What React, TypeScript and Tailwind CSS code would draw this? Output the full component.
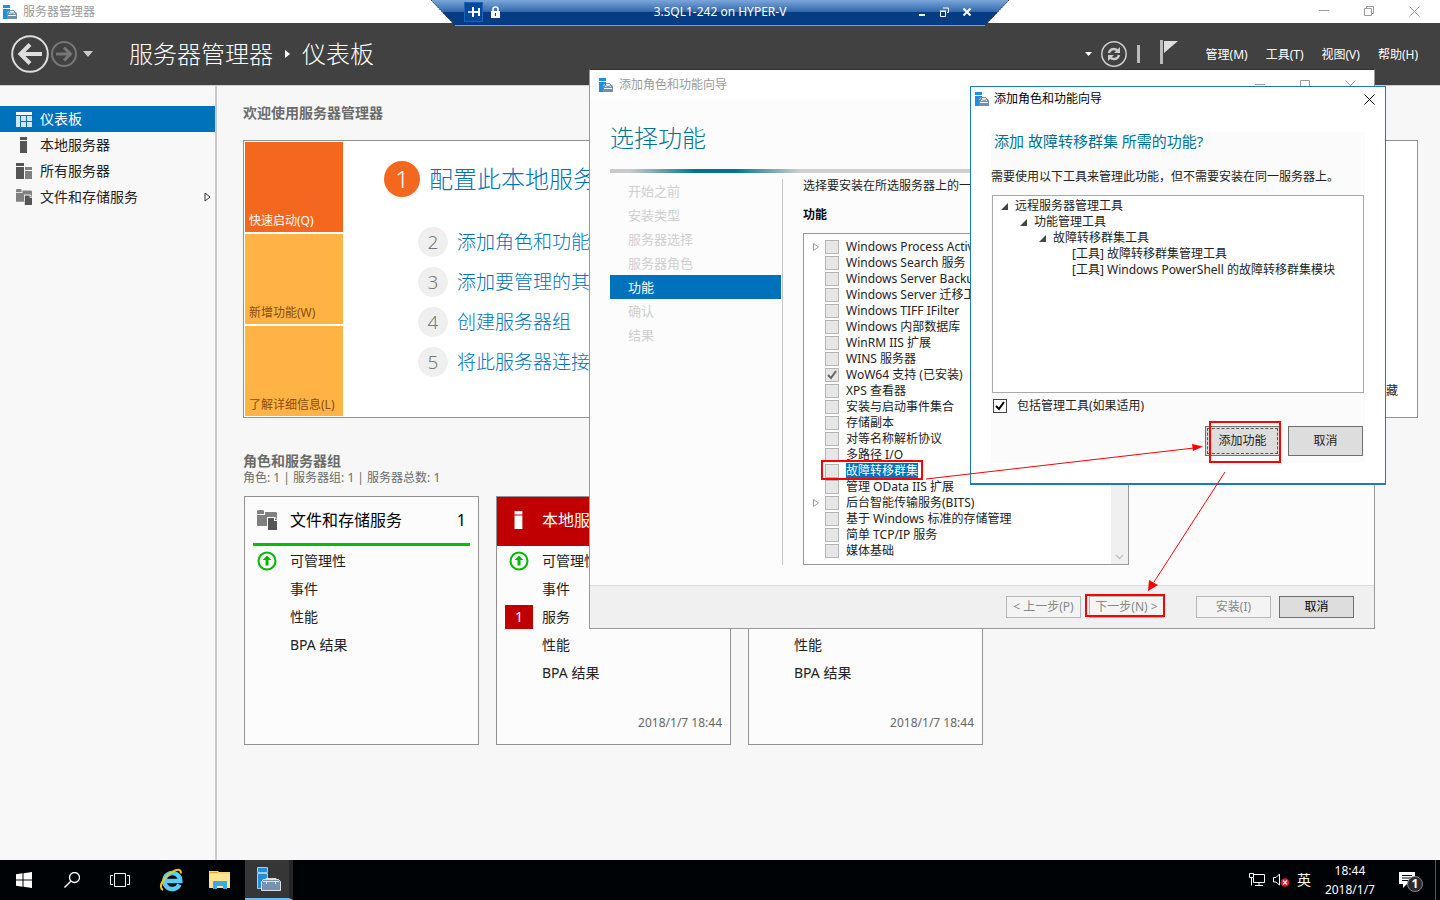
import type { ReactNode } from 'react'

interface Feature {
  name: string
  expandable?: boolean
  checked?: boolean
  selected?: boolean
}

interface TileRow {
  label: string
  ok?: boolean
  alert?: number
}

interface Tile {
  title: string
  icon: ReactNode
  alert: boolean
  rows: TileRow[]
  timestamp?: string
}

const FEATURES: Feature[] = [
  { name: 'Windows Process Activation Service', expandable: true },
  { name: 'Windows Search 服务' },
  { name: 'Windows Server Backup' },
  { name: 'Windows Server 迁移工具' },
  { name: 'Windows TIFF IFilter' },
  { name: 'Windows 内部数据库' },
  { name: 'WinRM IIS 扩展' },
  { name: 'WINS 服务器' },
  { name: 'WoW64 支持 (已安装)', checked: true },
  { name: 'XPS 查看器' },
  { name: '安装与启动事件集合' },
  { name: '存储副本' },
  { name: '对等名称解析协议' },
  { name: '多路径 I/O' },
  { name: '故障转移群集', selected: true },
  { name: '管理 OData IIS 扩展' },
  { name: '后台智能传输服务(BITS)', expandable: true },
  { name: '基于 Windows 标准的存储管理' },
  { name: '简单 TCP/IP 服务' },
  { name: '媒体基础' },
]

const WIZARD_STEPS = ['开始之前', '安装类型', '服务器选择', '服务器角色', '功能', '确认', '结果']

const QUICK_STEPS = ['添加角色和功能', '添加要管理的其他服务器', '创建服务器组', '将此服务器连接到云服务']

function ServerManagerIcon({ className }: { className: string }) {
  return (
    <svg viewBox="0 0 14 14" className={className} aria-hidden="true">
      <path d="M0 0h7v3H0zM0 4h7v2L4 7v7H0z" fill="#1f8fe0" />
      <path d="M3 8.500L5 7h8l1 1.500V14H4V9z" fill="#6f8fab" />
      <path d="M6 7.500L7 5.500h4l1 2" fill="none" stroke="#6f8fab" />
      <path d="M6 8.500q3.500-2 6 0M5 10.500h8" stroke="#fff" strokeWidth=".9" fill="none" />
    </svg>
  )
}

function DashboardIcon() {
  return (
    <svg viewBox="0 0 16 15" className="h-[15px] w-4">
      <path d="M0 0h16v3H0z" fill="#fff" />
      <path d="M0 4h4v11H0zM5 4h5v5H5zM11 4h5v5h-5zM5 10h5v5H5zM11 10h5v5h-5z" fill="#cfe6f7" />
    </svg>
  )
}

function LocalServerIcon({ className, fill = '#555' }: { className: string; fill?: string }) {
  return (
    <svg viewBox="0 0 16 16" className={className}>
      <path d="M4 0h7v3H4zM4 4h7v12H4z" fill={fill} />
    </svg>
  )
}

function AllServersIcon({ className, back = '#808080', front = '#555' }: { className: string; back?: string; front?: string }) {
  return (
    <svg viewBox="0 0 16 16" className={className}>
      <path d="M0 0h8v3H0zM0 4h8v12H0z" fill={front} />
      <path d="M9 4h7v3H9zM9 8h7v8H9z" fill={back} />
    </svg>
  )
}

function StorageIcon({ className, paper }: { className: string; paper: string }) {
  return (
    <svg viewBox="0 0 20 20" className={className}>
      <path d="M1 0h5l1 1v3H0V1zM0 5h8V2h11l1 1v13H0z" fill="#808080" />
      <path d="M10 7h8l2 2v11h-9v-4h-1z" fill={paper} />
      <path d="M11 8h6v3h3v9h-9z" fill="#555" />
      <path d="M18 8l2 2h-2z" fill="#555" />
    </svg>
  )
}

function CloseGlyph({ className }: { className: string }) {
  return (
    <svg viewBox="0 0 11 11" className={className}>
      <path d="M.5.5l10 10M10.500.5l-10 10" stroke="currentColor" fill="none" />
    </svg>
  )
}

function CheckGlyph({ className }: { className: string }) {
  return (
    <svg viewBox="0 0 14 14" className={className}>
      <path d="M3 7l3 3 5-7" fill="none" stroke="currentColor" strokeWidth="2" />
    </svg>
  )
}

function OkIcon() {
  return (
    <svg viewBox="0 0 20 20" className="size-5">
      <circle cx="10" cy="10" r="8.500" fill="none" stroke="#00b800" strokeWidth="2" />
      <path d="M10 4.500l4.500 4.500h-3v5.500h-3V9h-3z" fill="#00b800" />
    </svg>
  )
}

const TILES: Tile[] = [
  {
    title: '文件和存储服务',
    icon: <StorageIcon className="size-5" paper="#fcfcfc" />,
    alert: false,
    rows: [{ label: '可管理性', ok: true }, { label: '事件' }, { label: '性能' }, { label: 'BPA 结果' }],
  },
  {
    title: '本地服务器',
    icon: <LocalServerIcon className="size-[18px]" fill="#fff" />,
    alert: true,
    rows: [
      { label: '可管理性', ok: true },
      { label: '事件' },
      { label: '服务', alert: 1 },
      { label: '性能' },
      { label: 'BPA 结果' },
    ],
    timestamp: '2018/1/7 18:44',
  },
  {
    title: '所有服务器',
    icon: <AllServersIcon className="size-[18px]" front="#fff" back="#fff" />,
    alert: true,
    rows: [
      { label: '可管理性', ok: true },
      { label: '事件' },
      { label: '服务', alert: 1 },
      { label: '性能' },
      { label: 'BPA 结果' },
    ],
    timestamp: '2018/1/7 18:44',
  },
]

function TitleBar() {
  return (
    <div className="flex h-[23px] items-center bg-white pl-[3px] text-[#999]">
      <ServerManagerIcon className="size-[14px]" />
      <span className="ml-[6px] flex-1">服务器管理器</span>
      <button aria-label="最小化" className="flex w-[45px] justify-center">
        <svg viewBox="0 0 11 11" className="size-[11px]"><path d="M0 4.500h10" stroke="currentColor" /></svg>
      </button>
      <button aria-label="还原" className="flex w-[45px] justify-center">
        <svg viewBox="0 0 11 11" className="size-[11px]">
          <path d="M.5 2.500h7v7h-7zM2.500 2.500v-2h7v7h-2" fill="none" stroke="currentColor" />
        </svg>
      </button>
      <button aria-label="关闭" className="mr-[3px] flex w-[45px] justify-center">
        <CloseGlyph className="size-[11px]" />
      </button>
    </div>
  )
}

function ConnectionBar() {
  return (
    <div className="absolute top-0 left-1/2 h-[26px] w-[578px] -translate-x-1/2">
      <svg viewBox="0 0 578 26" className="absolute inset-0 h-[26px] w-[578px]">
        <defs>
          <linearGradient id="bar" x1="0" y1="0" x2="0" y2="1">
            <stop offset="0" stopColor="#7ba6da" />
            <stop offset=".46" stopColor="#3269ac" />
            <stop offset=".47" stopColor="#053b82" />
            <stop offset="1" stopColor="#053c85" />
          </linearGradient>
        </defs>
        <path d="M0 0h578l-24 25.500H24z" fill="url(#bar)" />
        <path d="M0 0l24 25.500M578 0l-24 25.500" stroke="#333" strokeDasharray="2 1" />
        <path d="M24 25.500h530" stroke="#7d9cca" />
      </svg>
      <div className="relative flex h-6 items-center pr-[38px] pl-[33px] text-white">
        <button aria-label="固定" className="flex h-5 w-[19px] items-center justify-center border border-[#1565b8] bg-[#07489b]">
          <svg viewBox="0 0 12 10" className="h-[10px] w-3" fill="none" stroke="#fff">
            <path d="M0 5h4" strokeWidth="1.500" />
            <path d="M5 0v10M6 5h5M11 1v8" strokeWidth="2" />
          </svg>
        </button>
        <svg viewBox="0 0 9 12" className="ml-2 h-3 w-[9px]">
          <path d="M2 5V3q0-2 2.500-2T7 3v2" fill="none" stroke="#fff" strokeWidth="1.500" />
          <path d="M0 5h9v7H0zM4 7v3h1V7z" fill="#fff" fillRule="evenodd" />
        </svg>
        <span className="flex-1 pl-[22px] text-center">3.SQL1-242 on HYPER-V</span>
        <div className="flex items-center gap-[14px]">
          <button aria-label="最小化">
            <svg viewBox="0 0 8 10" className="h-[10px] w-2"><path d="M1 8h6" stroke="#fff" strokeWidth="2" /></svg>
          </button>
          <button aria-label="还原">
            <svg viewBox="0 0 9 10" className="h-[10px] w-[9px]" fill="none" stroke="#fff">
              <path d="M.5 4.500h5v5h-5zM0 4h6M3 1h5.500v4.500H7" />
            </svg>
          </button>
          <button aria-label="关闭">
            <svg viewBox="0 0 8 8" className="size-2"><path d="M.5.5l7 7M7.500.5l-7 7" stroke="#fff" strokeWidth="2" /></svg>
          </button>
        </div>
      </div>
    </div>
  )
}

function Header() {
  return (
    <header className="flex h-[62px] items-center bg-[#414141] pr-[22px] pl-[11px] text-white">
      <button aria-label="后退">
        <svg viewBox="0 0 38 38" className="size-[38px]" fill="none" stroke="#ddd">
          <circle cx="19" cy="19" r="17.800" strokeWidth="2" />
          <path d="M9 19h22" strokeWidth="4" />
          <path d="M19 9.500L9.500 19l9.500 9.500" strokeWidth="4" />
        </svg>
      </button>
      <button aria-label="前进" className="ml-[2px]">
        <svg viewBox="0 0 26 26" className="size-[26px]" fill="none" stroke="#777">
          <circle cx="13" cy="13" r="12" strokeWidth="2" />
          <path d="M5 13h14M13 6.500l6.500 6.500-6.500 6.500" strokeWidth="3" />
        </svg>
      </button>
      <button aria-label="历史记录" className="ml-[6px]">
        <svg viewBox="0 0 10 6" className="h-[6px] w-[10px]"><path d="M0 0h10L5 6z" fill="#ccc" /></svg>
      </button>
      <h1 className="ml-9 flex items-center text-[24px] leading-8 font-light">
        服务器管理器
        <svg viewBox="0 0 5 8" className="mx-3 h-2 w-[5px]"><path d="M0 0l5 4-5 4z" fill="#fff" /></svg>
        仪表板
      </h1>
      <div className="ml-auto flex items-center">
        <svg viewBox="0 0 7 4" className="h-1 w-[7px]"><path d="M0 0h7L3.500 4z" fill="#fff" /></svg>
        <button aria-label="刷新" className="ml-[9px]">
          <svg viewBox="0 0 26 26" className="size-[26px]" fill="none" stroke="#ccc">
            <circle cx="13" cy="13" r="12.200" strokeWidth="1.500" />
            <path d="M8 12q1-4 5-4 2.500 0 4 2M18 14q-1 4-5 4-2.500 0-4-2" strokeWidth="2.500" />
            <path d="M19 6v6h-6zM7 20v-6h6z" fill="#ccc" stroke="none" />
          </svg>
        </button>
        <span className="ml-[10px] h-[18px] w-[3px] bg-[#bbb]" />
        <button aria-label="通知" className="mr-7 mb-1 ml-5">
          <svg viewBox="0 0 18 24" className="h-6 w-[18px]">
            <path d="M0 0h3v24H0z" fill="#bbb" />
            <path d="M4 1h14L4 13z" fill="#ddd" />
          </svg>
        </button>
        <nav className="flex gap-[18px] pt-px">
          <button>管理(M)</button>
          <button>工具(T)</button>
          <button>视图(V)</button>
          <button>帮助(H)</button>
        </nav>
      </div>
    </header>
  )
}

function Sidebar() {
  const items = [
    { label: '仪表板', icon: <DashboardIcon />, active: true },
    { label: '本地服务器', icon: <LocalServerIcon className="size-4" /> },
    { label: '所有服务器', icon: <AllServersIcon className="size-4" /> },
    { label: '文件和存储服务', icon: <StorageIcon className="size-4" paper="#f8f8f8" />, more: true },
  ]
  return (
    <nav className="w-[217px] shrink-0 border-r-2 border-[#cacaca] bg-[#f8f8f8] pt-5 text-[14px]">
      {items.map((item) => (
        <a
          key={item.label}
          href="#"
          className={`flex h-[26px] items-center pr-1 pl-4 ${item.active ? 'bg-[#0072bc] text-white' : 'text-[#222]'}`}
        >
          {item.icon}
          <span className="ml-2 flex-1">{item.label}</span>
          {item.more && (
            <svg viewBox="0 0 7 10" className="h-[10px] w-[7px]">
              <path d="M1 1l5 4-5 4z" fill="none" stroke="#333" />
            </svg>
          )}
        </a>
      ))}
    </nav>
  )
}

function Welcome() {
  return (
    <section>
      <h2 className="text-[14px] leading-5 font-bold text-[#6b6b6b]">欢迎使用服务器管理器</h2>
      <div className="mt-[17px] flex border border-[#929292] bg-white p-px">
        <div className="flex w-[98px] shrink-0 flex-col gap-[2px]">
          <button className="flex h-[90px] items-end bg-[#f4671f] px-1 pb-[3px] text-white">快速启动(Q)</button>
          <button className="flex h-[90px] items-end bg-[#ffb345] px-1 pb-[3px] text-[#8a4b10]">新增功能(W)</button>
          <button className="flex h-[90px] items-end bg-[#ffb345] px-1 pb-[3px] text-[#8a4b10]">了解详细信息(L)</button>
        </div>
        <div className="flex flex-1 flex-col pt-[19px] pl-[41px] font-light">
          <a href="#" className="flex items-center gap-[9px] text-[24px] leading-9 text-[#0072bc]">
            <span className="flex size-9 items-center justify-center rounded-full bg-[#f4671f] text-white">1</span>
            配置此本地服务器
          </a>
          <div className="mt-[30px] ml-[34px] flex flex-col gap-[10px]">
            {QUICK_STEPS.map((step, i) => (
              <a key={step} href="#" className="flex items-center gap-[9px] text-[19px] leading-[30px] text-[#0072bc]">
                <span className="flex size-[30px] items-center justify-center rounded-full bg-[#efefef] text-[#777]">{i + 2}</span>
                {step}
              </a>
            ))}
          </div>
        </div>
        <button className="mr-[18px] mb-[17px] self-end text-[#222]">隐藏</button>
      </div>
    </section>
  )
}

function RoleTile({ tile }: { tile: Tile }) {
  return (
    <article className="flex h-[249px] w-[235px] flex-col border border-[#929292] bg-[#fcfcfc] text-[14px] text-[#222]">
      <div className={tile.alert ? 'bg-[#c00000] px-2 text-white' : 'px-2 text-black'}>
        <div className={`flex h-[49px] items-center border-b-3 ${tile.alert ? 'border-[#c00000]' : 'border-[#00c000]'}`}>
          <span className="flex w-7 justify-center">{tile.icon}</span>
          <h3 className="ml-[9px] flex-1 text-[16px]">{tile.title}</h3>
          <span className="pr-1 text-[16px]">1</span>
        </div>
      </div>
      <ul className="flex-1 px-2 pt-px">
        {tile.rows.map((row) => (
          <li key={row.label} className="flex h-7 items-center">
            <span className="flex w-7 justify-center">
              {row.ok && <OkIcon />}
              {row.alert && <span className="h-6 w-7 bg-[#c00000] text-center leading-6 text-white">{row.alert}</span>}
            </span>
            <span className="ml-[9px]">{row.label}</span>
          </li>
        ))}
      </ul>
      {tile.timestamp && <time className="pr-2 pb-[13px] text-right text-[12px] text-[#666]">{tile.timestamp}</time>}
    </article>
  )
}

function Roles() {
  return (
    <section className="mt-[34px]">
      <h2 className="text-[14px] leading-[18px] font-bold text-[#6b6b6b]">角色和服务器组</h2>
      <p className="text-[#6b6b6b]">角色: 1 | 服务器组: 1 | 服务器总数: 1</p>
      <div className="mt-[10px] ml-px flex gap-[17px]">
        {TILES.map((tile) => (
          <RoleTile key={tile.title} tile={tile} />
        ))}
      </div>
    </section>
  )
}

function FeatureRow({ feature }: { feature: Feature }) {
  return (
    <label className="flex h-4 items-center pl-[9px] whitespace-nowrap text-[#222]">
      <svg viewBox="0 0 6 8" className={`h-2 w-[6px] ${feature.expandable ? '' : 'invisible'}`}>
        <path d="M.5.500l5 3.500-5 3.500z" fill="none" stroke="#999" />
      </svg>
      <span className="relative ml-[6px] size-[14px] shrink-0">
        <input
          type="checkbox"
          defaultChecked={feature.checked}
          className="block size-[14px] appearance-none border border-[#b4b4b4] bg-[#e6e6e6]"
        />
        {feature.checked && <CheckGlyph className="absolute inset-0 size-[14px] text-[#666]" />}
      </span>
      <span className={`ml-[7px] leading-4 ${feature.selected ? 'bg-[#0072bc] text-white' : ''}`}>{feature.name}</span>
    </label>
  )
}

function Wizard() {
  return (
    <div className="absolute top-[69px] left-[589px] flex w-[786px] flex-col border border-t-[#333] border-r-[#999] border-b-[#999] border-l-[#999] bg-[#fcfcfc]">
      <div className="flex h-[30px] items-center bg-white pl-[9px] text-[#999]">
        <ServerManagerIcon className="size-[14px]" />
        <span className="ml-[6px] flex-1">添加角色和功能向导</span>
        <button aria-label="最小化" className="flex w-[45px] justify-center">
          <svg viewBox="0 0 11 11" className="size-[11px]"><path d="M0 4.500h10" stroke="currentColor" /></svg>
        </button>
        <button aria-label="最大化" className="flex w-[45px] justify-center">
          <svg viewBox="0 0 11 11" className="size-[11px]"><path d="M.5.5h9v9h-9z" fill="none" stroke="currentColor" /></svg>
        </button>
        <button aria-label="关闭" className="mr-px flex w-[45px] justify-center">
          <CloseGlyph className="size-[11px]" />
        </button>
      </div>
      <div className="px-5 pt-[22px] pb-5">
        <h2 className="text-[24px] leading-8 font-light text-[#007395]">选择功能</h2>
        <div className="mt-[15px] h-1 bg-[linear-gradient(to_right,#cacaca_20px,#007395_85px,#007395_125px,#cfcfcf_190px)]" />
        <div className="mt-[6px] flex">
          <nav className="w-[173px] shrink-0 border-r border-[#c4c4c4] pr-px text-[13px]">
            {WIZARD_STEPS.map((step) => (
              <button
                key={step}
                disabled={step !== '功能'}
                className={`block h-6 w-full pl-[18px] text-left ${step === '功能' ? 'bg-[#0072bc] text-white' : 'text-[#cfcfcf]'}`}
              >
                {step}
              </button>
            ))}
          </nav>
          <div className="pl-5 text-[#222]">
            <p className="leading-[14px]">选择要安装在所选服务器上的一个或多个功能。</p>
            <h3 className="my-3 leading-4 font-bold text-black pt-[2px] pb-0">功能</h3>
            <div className="-mt-[2px] flex w-[326px] border border-[#999] bg-white">
              <div className="flex-1 overflow-hidden py-[5px]">
                {FEATURES.map((feature) => (
                  <FeatureRow key={feature.name} feature={feature} />
                ))}
              </div>
              <div className="flex w-[17px] items-end justify-center bg-[#f0f0f0] pb-1">
                <svg viewBox="0 0 9 6" className="h-[6px] w-[9px]">
                  <path d="M1 1l3.500 3.500L8 1" fill="none" stroke="#c4c4c4" strokeWidth="1.500" />
                </svg>
              </div>
            </div>
          </div>
        </div>
      </div>
      <div className="flex h-[43px] items-center justify-end gap-2 border-t border-[#dcdcdc] bg-[#f0f0f0] pr-5">
        <button disabled className="h-[22px] w-[75px] border border-[#b4b8b8] bg-[#f4f4f4] text-[#888]">&lt; 上一步(P)</button>
        <button disabled className="h-[22px] w-[75px] border border-[#b4b8b8] bg-[#f4f4f4] text-[#888]">下一步(N) &gt;</button>
        <button disabled className="ml-6 h-[22px] w-[75px] border border-[#b4b8b8] bg-[#f4f4f4] text-[#888]">安装(I)</button>
        <button className="h-[22px] w-[75px] border border-[#707070] bg-[#ddd] text-black">取消</button>
      </div>
    </div>
  )
}

function TreeNode({ label, children }: { label: string; children?: ReactNode }) {
  return (
    <li>
      <div className="flex h-4 items-center gap-[7px]">
        <svg viewBox="0 0 7 7" className={`size-[7px] ${children ? '' : 'invisible'}`}><path d="M7 0v7H0z" fill="#444" /></svg>
        <span>{label}</span>
      </div>
      {children && <ul className="pl-[19px]">{children}</ul>}
    </li>
  )
}

function AddFeaturesDialog() {
  return (
    <div role="dialog" className="absolute top-[86px] left-[970px] w-[416px] border border-b-2 border-[#1a7bc4] bg-white text-[#222]">
      <div className="flex h-6 items-center pr-[10px] pl-1 text-black">
        <ServerManagerIcon className="size-[14px]" />
        <span className="ml-[5px] flex-1">添加角色和功能向导</span>
        <button aria-label="关闭"><CloseGlyph className="size-[11px]" /></button>
      </div>
      <div className="mx-5 mt-[21px] mb-5 bg-[#fbfbfb] pb-[7px]">
        <h2 className="pl-[3px] text-[15px] leading-[18px] text-[#007395]">添加 故障转移群集 所需的功能?</h2>
        <p className="mt-[19px] leading-4">需要使用以下工具来管理此功能，但不需要安装在同一服务器上。</p>
        <ul className="mt-[10px] mr-px ml-px h-[198px] border border-[#a8a8a8] bg-white pt-[2px] pl-2">
          <TreeNode label="远程服务器管理工具">
            <TreeNode label="功能管理工具">
              <TreeNode label="故障转移群集工具">
                <TreeNode label="[工具] 故障转移群集管理工具" />
                <TreeNode label="[工具] Windows PowerShell 的故障转移群集模块" />
              </TreeNode>
            </TreeNode>
          </TreeNode>
        </ul>
        <label className="mt-[5px] ml-[2px] flex h-4 items-center">
          <span className="relative size-[14px]">
            <input type="checkbox" defaultChecked className="block size-[14px] appearance-none border border-[#444] bg-white" />
            <CheckGlyph className="absolute inset-0 size-[14px] text-black" />
          </span>
          <span className="ml-[10px]">包括管理工具(如果适用)</span>
        </label>
        <div className="mt-3 flex justify-end gap-2 pr-[2px]">
          <button className="h-[30px] w-[75px] border border-[#707070] bg-[#ddd] p-px">
            <span className="flex size-full items-center justify-center border border-dashed border-[#555]">添加功能</span>
          </button>
          <button className="h-[30px] w-[75px] border border-[#707070] bg-[#ddd]">取消</button>
        </div>
      </div>
    </div>
  )
}

// Red boxes and arrows that mark the click order
function Annotations() {
  return (
    <svg viewBox="0 0 480 240" className="pointer-events-none absolute top-[400px] left-[810px] h-[240px] w-[480px]">
      <g fill="none" stroke="#f00" strokeWidth="2">
        <path d="M12 61h100v18H12zM400 22h70v40h-70zM276 195h78v21h-78z" />
        <path d="M116 79l268-31M415 72l-71 110" strokeWidth="1" />
      </g>
      <path d="M393 46.500l-11-2.500 1 7zM338 191l1-11 9 5z" fill="#f00" />
    </svg>
  )
}

function Taskbar() {
  return (
    <footer className="flex h-10 items-center bg-[#000306] text-white">
      <button aria-label="开始" className="flex w-12 justify-center">
        <svg viewBox="0 0 16 16" className="size-4"><path d="M0 2.200L6.500 1.300v6.200H0zM7.500 1.200L16 0v7.500H7.500zM0 8.500h6.500v6.200L0 13.800zM7.500 8.500H16V16l-8.500-1.200z" fill="#fff" /></svg>
      </button>
      <button aria-label="搜索" className="flex w-12 justify-center">
        <svg viewBox="0 0 16 16" className="size-4" fill="none" stroke="#fff">
          <circle cx="10.500" cy="5.500" r="5" strokeWidth="1.300" />
          <path d="M7 9L.5 15.500" strokeWidth="1.500" />
        </svg>
      </button>
      <button aria-label="任务视图" className="flex w-12 justify-center">
        <svg viewBox="0 0 20 14" className="h-[14px] w-5" fill="none" stroke="#fff">
          <path d="M4.500.5h11v13h-11zM3 2.500H.5v9H3M17 2.500h2.500v9H17" />
        </svg>
      </button>
      <button aria-label="Internet Explorer" className="ml-[3px] flex w-12 justify-center">
        <svg viewBox="0 0 24 24" className="size-6" fill="none">
          <path d="M20.500 16.500a8 8 0 1 1 .8-3.500H7" stroke="#5accf5" strokeWidth="4.500" />
          <path d="M4 22C-2 19 6 8 13 4c5-3 9-3.500 9 1.500" stroke="#f5c518" strokeWidth="2" />
        </svg>
      </button>
      <button aria-label="文件资源管理器" className="ml-px flex w-12 justify-center">
        <svg viewBox="0 0 22 18" className="h-[18px] w-[22px]">
          <path d="M0 0h9l1 1h11v16H0z" fill="#f8d775" />
          <path d="M1 1h8v1H1z" fill="#e5a82a" />
          <path d="M0 3h21v14H0z" fill="#ffe594" />
          <path d="M4 10h14v8h-4v-3H8v3H4z" fill="#3ba9dd" />
        </svg>
      </button>
      <button aria-label="服务器管理器" className="ml-px flex h-10 w-12 items-center justify-center border-r-4 border-b-2 border-r-[#252525] border-b-[#76b9ed] bg-[#363636] pl-1">
        <svg viewBox="0 0 24 24" className="size-6">
          <path d="M.5.5h10v5H.5zM.5 6.500h10v6H6v9H.5z" fill="#1f8fe0" stroke="#9cd0f5" />
          <path d="M4.500 14.500l2-2h15l2 2v9h-19z" fill="#7791ae" stroke="#d8e2ec" />
          <path d="M9 13v-1.500h10V13M6 14.500h16M9.500 14v3M18.500 14v3" fill="none" stroke="#d8e2ec" />
        </svg>
      </button>
      <div className="ml-auto flex items-center">
        <svg viewBox="0 0 16 14" className="h-[14px] w-4" fill="none" stroke="#fff">
          <path d="M4.500 1.500h11v8h-11V5M.5.5h4v4h-4zM2.500 4.500v8M10 9.500v3M6 12.500h8" />
        </svg>
        <svg viewBox="0 0 16 14" className="ml-2 h-[14px] w-4">
          <path d="M.5 4.500H3L6.500 1v11L3 9H.5z" fill="none" stroke="#fff" />
          <circle cx="12" cy="9.500" r="4.300" fill="#e81123" />
          <path d="M10 7.500l4 4M14 7.500l-4 4" stroke="#fff" strokeWidth="1.200" />
        </svg>
        <span className="ml-2 text-[14px]">英</span>
        <time className="ml-[14px] text-center leading-[19px]">
          18:44
          <br />
          2018/1/7
        </time>
        <button aria-label="通知" className="relative mr-3 ml-6 h-6 w-6">
          <svg viewBox="0 0 16 16" className="size-4">
            <path d="M0 0h16v12H8l-4 4v-4H0z" fill="#fff" />
            <path d="M3 3.500h10M3 6h10M3 8.500h6" stroke="#000306" />
          </svg>
          <span className="absolute top-2 left-2 size-4 rounded-full border border-[#888] bg-[#2a2a2a] text-center text-[12px] leading-[14px] font-bold">1</span>
        </button>
        <span className="mr-1 h-10 w-px bg-[#555]" />
      </div>
    </footer>
  )
}

export default function App() {
  return (
    <div className="relative flex min-h-screen flex-col overflow-hidden bg-[#f7f7f7] font-['Noto_Sans','Noto_Sans_CJK_SC',sans-serif] text-[12px] leading-4">
      <TitleBar />
      <Header />
      <div className="flex flex-1 border-t border-[#d0d0d0]">
        <Sidebar />
        <main className="min-w-0 flex-1 pt-[17px] pr-[22px] pl-[26px]">
          <Welcome />
          <Roles />
        </main>
      </div>
      <Taskbar />
      <ConnectionBar />
      <Wizard />
      <AddFeaturesDialog />
      <Annotations />
    </div>
  )
}
